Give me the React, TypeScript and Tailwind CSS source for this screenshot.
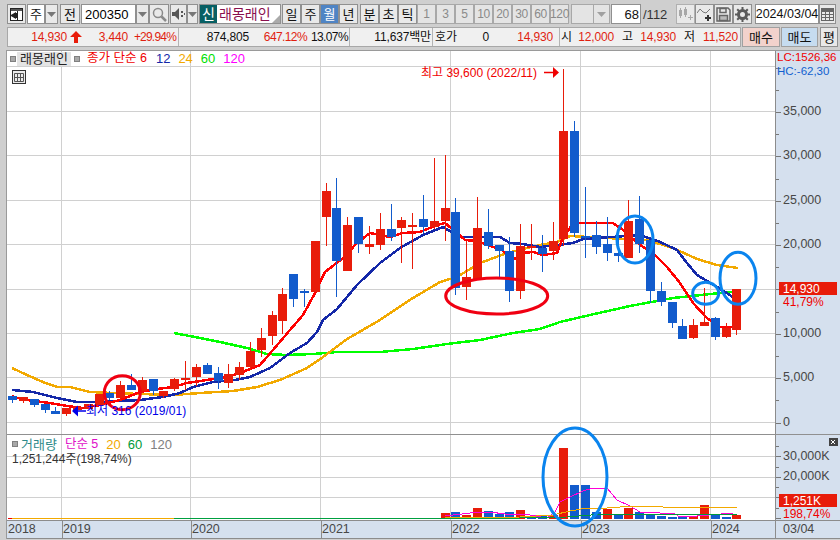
import React from "react";

const RED = "#E81C0A";
const BLUE = "#125BCC";
const PX = (i: number) => Math.floor(12.65 + 10.81 * i);

// [red?, bodyTop, bodyBottom, wickTop, wickBottom]
const candles: [number, number, number, number, number][] = [
  [0,396,400,396,403],[1,397,401,397,403],[0,399,405,399,407],[0,404,410,404,413],[0,411,414,407,414],[1,408,414,408,416],
  [1,407,410,407,411],[1,404,409,404,409],[1,394,405,394,406],[0,393,398,391,400],[1,385,398,381,401],[0,385,390,374,390],
  [1,380,391,377,393],[0,379,391,379,395],[1,391,396,391,398],[1,379,389,378,391],[1,378,380,361,390],[1,367,377,364,386],
  [0,365,374,363,374],[0,373,381,367,389],[1,374,383,364,388],[1,367,375,362,380],[1,351,367,342,370],[1,338,350,328,357],
  [1,315,336,311,345],[1,294,321,288,334],[0,274,299,274,307],[0,291,293,289,307],[1,241,292,241,292],[1,191,217,183,246],
  [0,208,261,178,297],[1,225,271,217,271],[0,217,244,217,253],[1,244,247,226,254],[1,229,245,213,250],[0,229,237,204,241],
  [1,220,228,217,263],[1,225,227,213,269],[0,219,227,195,233],[1,221,227,158,229],[1,208,221,155,241],[0,212,288,198,295],
  [1,277,287,241,300],[1,228,280,197,280],[0,232,246,209,249],[0,245,251,245,277],[0,251,291,237,302],[1,246,291,224,299],
  [1,246,247,224,260],[0,248,254,235,272],[1,241,251,222,260],[1,131,239,69,246],[0,131,233,121,237],[0,236,238,187,258],
  [0,235,247,221,254],[0,244,253,217,261],[0,253,256,236,262],[1,221,258,200,258],[0,219,244,196,253],[0,240,291,240,303],
  [0,291,302,282,306],[0,302,323,302,328],[0,326,339,319,339],[1,325,338,319,339],[1,322,326,288,326],[0,318,337,317,340],
  [1,328,337,323,338],[1,289,330,289,335],
];

const ma6 = "12,396 18,398 33,401 50,403 67,406 83,408 100,405 120,400 140,392 157,389 173,387 187,383 207,380 227,377 240,373 260,365 273,350 290,330 303,315 315,293 325,272 343,258 357,243 370,233 390,237 403,233 420,232 437,225 445,223 457,233 465,240 477,241 488,245 502,250 513,260 523,253 533,252 543,255 557,253 562,240 573,223 593,223 613,223 623,230 640,245 653,253 667,267 680,283 693,303 707,318 720,327 737,327";
const ma12 = "12,390 33,392 57,398 77,402 100,402 140,400 163,397 180,393 193,387 213,382 235,380 250,377 270,368 290,353 307,343 317,332 323,320 337,309 357,285 380,263 400,248 423,235 443,227 453,233 460,237 500,237 510,243 523,244 540,247 557,245 573,243 583,239 640,235 660,242 677,250 687,263 697,275 717,287 733,297";
const ma24 = "12,368 27,375 43,382 57,387 70,387 90,392 113,393 140,394 173,395 200,393 233,391 257,387 280,380 307,368 323,357 347,339 380,320 413,298 440,282 457,277 480,263 507,253 527,248 540,245 557,242 570,236 607,238 647,240 673,248 697,259 717,265 738,268";
const ma60 = "174,333 200,338 220,342 247,348 267,354 287,355 313,354 337,352 380,352 413,349 447,344 480,340 513,333 540,329 560,322 590,315 630,306 673,298 720,293 733,292";

const volBars: [number, number][] = [
  [40,513],[41,512],[42,515],[43,508],[44,511],[45,514],[46,512],[47,510],[48,516],[49,516],[50,515],[51,448],[52,485],[53,485],[54,512],[55,509],
  [56,515],[57,508],[58,512],[59,515],[60,516],[61,517],[62,517],[63,516],[64,505],[65,515],[66,517],[67,515],
];
const volColor: Record<number, boolean> = { 40:true,41:false,42:true,43:true,44:false,45:false,46:false,47:true,48:false,49:false,50:true,51:true,52:false,53:false,54:false,55:true,56:false,57:true,58:false,59:false,60:false,61:false,62:false,63:true,64:true,65:false,66:false,67:true };

const volMag = "445,516 470,513 490,512 505,514 520,514 530,515 547,518 555,512 560,502 570,497 583,491 593,488 607,488 617,500 630,506 640,512 660,513 675,514 680,517 697,516 733,513";
const volOr = "445,518 520,517 553,515 570,511 587,508 607,508 620,507 647,506 663,507 687,508 700,507 737,507";
const volGr = "520,518 567,517 603,514 653,514 737,514";

const vGrid = [61.5, 190.5, 320.5, 450.5, 580.5, 710.5];
const priceGrid = [66.5, 111.5, 155.5, 200.5, 244.5, 289.5, 333.5, 377.5, 422.5];
const priceLabels: [string, number][] = [["35,000",111],["30,000",155],["25,000",200],["20,000",244],["15,000",289],["10,000",333],["5,000",377],["0",422]];

function Tri({ color = "#777" }: { color?: string }) {
  return (
    <svg width="9" height="5" viewBox="0 0 9 5"><path d="M0 0h9L4.5 5z" fill={color} /></svg>
  );
}

function Btn({ className = "", bg = "bg-[#e9e9e9]", children }: { className?: string; bg?: string; children?: React.ReactNode }) {
  return (
    <div className={"flex items-center justify-center h-[20px] border border-[#909090] text-[13px] " + bg + " " + className}>
      {children}
    </div>
  );
}

function Square({ className = "" }: { className?: string }) {
  return <span className={"inline-block w-[6px] h-[6px] bg-[#a8a8a8] border border-[#808080] " + className} />;
}

function Ring({ cx, cy, rx, ry, color }: { cx: number; cy: number; rx: number; ry: number; color: string }) {
  return <ellipse cx={cx} cy={cy} rx={rx} ry={ry} fill="none" stroke={color} strokeWidth={3} />;
}

export default function App() {
  return (
    <div className="w-[840px] h-[540px] overflow-hidden bg-[#cfcfcf] flex flex-col font-['Liberation_Sans','Noto_Sans_CJK_KR',sans-serif] text-[12px] leading-none text-[#111]">
      {/* toolbar */}
      <div className="flex mt-[4px] ml-[7px] h-[20px] shrink-0">
        <Btn className="w-[19px]">
          <svg width="15" height="15" viewBox="0 0 15 15">
            <rect x="1.5" y="1.5" width="12" height="12" fill="#fff" stroke="#222" />
            <rect x="2" y="2" width="11" height="2" fill="#555" />
            <path d="M8.5 4v9" stroke="#222" />
            <path d="M7 5v7L1 8.500z" fill="#222" />
            <rect x="5" y="6" width="3" height="5" fill="#222" />
          </svg>
        </Btn>
        <Btn className="w-[18px] ml-[1px]" bg="bg-white">주</Btn>
        <Btn className="w-[13px]"><Tri /></Btn>
        <Btn className="w-[20px] ml-[2px]">전</Btn>
        <div className="w-[55px] ml-[1px] h-[20px] bg-white border border-[#909090] flex items-center pl-[3px] text-[13px] text-black">200350</div>
        <Btn className="w-[13px]"><Tri /></Btn>
        <Btn className="w-[20px]">
          <svg width="15" height="15" viewBox="0 0 15 15" fill="none" stroke="#8a8a8a" strokeWidth="1.500">
            <circle cx="6" cy="6" r="4.500" />
            <path d="M9.500 9.500L14 14" strokeWidth="2.500" />
          </svg>
        </Btn>
        <Btn className="w-[17px] ml-[1px]">
          <svg width="14" height="12" viewBox="0 0 14 12">
            <path d="M0 4h3l4-4v12L3 8H0z" fill="#555" />
            <rect x="9" y="3" width="2" height="2" fill="#555" />
            <rect x="9" y="7" width="2" height="2" fill="#555" />
            <rect x="12" y="5" width="1" height="2" fill="#555" />
          </svg>
        </Btn>
        <Btn className="w-[11px]"><Tri /></Btn>
        <div className="relative w-[82px] ml-[1px] h-[20px] bg-white border border-[#909090] flex items-center">
          <span className="w-[17px] h-[18px] bg-[#075f63] text-white text-[14px] flex items-center justify-center">신</span>
          <span className="ml-[2px] text-[#8a0f4e] text-[14px]">래몽래인</span>
          <svg className="absolute right-0 bottom-0" width="8" height="8" viewBox="0 0 8 8"><path d="M8 0v8H0z" fill="#aaa" /></svg>
        </div>
        <Btn className="w-[19px] ml-[1px]">일</Btn>
        <Btn className="w-[19px]">주</Btn>
        <Btn className="w-[19px] text-white" bg="bg-[#4f84c4]">월</Btn>
        <Btn className="w-[19px]">년</Btn>
        <Btn className="w-[19px] ml-[2px]">분</Btn>
        <Btn className="w-[19px]">초</Btn>
        <Btn className="w-[19px]">틱</Btn>
        {["1", "3", "5", "10", "20", "30", "60", "120"].map((t) => (
          <div key={t} className="w-[19px] h-[20px] flex items-center justify-center border border-[#a8a8a8] bg-[#e4e4e4] text-[#8a8a8a] text-[12px] tracking-[-0.3px] first:ml-[2px]">{t}</div>
        ))}
        <div className="w-[39px] ml-[2px] h-[20px] flex border border-[#a8a8a8] bg-[#e4e4e4]">
          <span className="flex-1 border-r border-[#a8a8a8]" />
          <span className="w-[15px] flex items-center justify-center"><Tri color="#a0a0a0" /></span>
        </div>
        <div className="w-[30px] ml-[1px] h-[20px] bg-white border border-[#909090] flex items-center justify-end pr-[1px] text-[13px]">68</div>
        <div className="w-[35px] h-[20px] flex items-center pl-[2px] text-[13px] text-[#333]">/112</div>
        <Btn className="w-[19px] border-[#b0b0b0]">
          <svg width="15" height="14" viewBox="0 0 15 14" fill="#a8a8a8">
            <rect x="1" y="3" width="3" height="6" /><rect x="2" y="1" width="1" height="10" />
            <rect x="6" y="2" width="3" height="6" /><rect x="7" y="0" width="1" height="10" />
            <path d="M10 10h2V8h1v2h2v1h-2v2h-1v-2h-2z" />
          </svg>
        </Btn>
        <Btn className="w-[19px]">
          <svg width="16" height="15" viewBox="0 0 16 15" fill="none" stroke="#777">
            <path d="M0 6l3-4 3 3 3 1 4-4" />
            <path d="M11 8v6M8 11h6" stroke="#333" strokeWidth="2" />
          </svg>
        </Btn>
        <Btn className="w-[19px]">
          <svg width="15" height="15" viewBox="0 0 15 15" fill="none" stroke="#666" strokeWidth="1.500">
            <path d="M1 1h11l2 2v11H1z" />
            <rect x="4" y="1.500" width="6" height="4" />
            <rect x="3.500" y="8.500" width="8" height="5" fill="#bbb" />
          </svg>
        </Btn>
        <Btn className="w-[19px]">
          <svg width="15" height="15" viewBox="0 0 15 15">
            <circle cx="7.500" cy="7.500" r="4" fill="none" stroke="#5a5a5a" strokeWidth="3" />
            <path d="M7.500 0v3M7.500 12v3M0 7.500h3M12 7.500h3M2.200 2.200l2 2M10.800 10.800l2 2M2.200 12.800l2-2M10.800 4.200l2-2" stroke="#5a5a5a" strokeWidth="2" />
          </svg>
        </Btn>
        <div className="w-[64px] ml-[3px] h-[20px] bg-white border border-[#909090] flex items-center justify-center text-[12.500px]">2024/03/04</div>
        <Btn className="w-[17px]">
          <svg width="13" height="13" viewBox="0 0 13 13" fill="none" stroke="#666">
            <rect x="0.500" y="0.500" width="12" height="12" />
            <rect x="0.500" y="0.500" width="12" height="3" fill="#666" />
            <path d="M4.500 3.500v9M8.500 3.500v9M0.500 6.500h12M0.500 9.500h12" />
          </svg>
        </Btn>
      </div>

      {/* quote row */}
      <div className="flex mt-[3px] ml-[7px] h-[20px] shrink-0">
        <div className="w-[734px] h-[20px] flex items-center bg-[#f0f0f0] border border-[#a8a8a8] text-[12px] tracking-[-0.15px] whitespace-nowrap">
          <span className="w-[59px] text-right text-[#e01f10]">14,930</span>
          <svg className="ml-[3px]" width="12" height="12" viewBox="0 0 12 12"><path d="M6 0l6 6H8v6H4V6H0z" fill="#e81c0a" /></svg>
          <span className="w-[46px] text-right text-[#e01f10]">3,440</span>
          <span className="w-[48px] text-right text-[#e01f10] tracking-[-0.8px]">+29.94%</span>
          <span className="w-[1px] h-[18px] ml-[2px] bg-[#b4b4b4]" />
          <span className="w-[70px] text-right">874,805</span>
          <span className="w-[58px] text-right text-[#e01f10] tracking-[-0.6px]">647.12%</span>
          <span className="w-[41px] text-right tracking-[-0.6px]">13.07%</span>
          <span className="w-[1px] h-[18px] ml-[1px] bg-[#b4b4b4]" />
          <span className="w-[81px] text-right">11,637백만</span>
          <span className="w-[1px] h-[18px] ml-[1px] bg-[#b4b4b4]" />
          <span className="w-[25px] ml-[2px]">호가</span>
          <span className="w-[29px] text-right">0</span>
          <span className="w-[64px] text-right text-[#e01f10]">14,930</span>
          <span className="w-[1px] h-[18px] ml-[6px] bg-[#b4b4b4]" />
          <span className="w-[13px] ml-[1px]">시</span>
          <span className="w-[40px] text-right text-[#e01f10]">12,000</span>
          <span className="w-[17px] ml-[8px]">고</span>
          <span className="w-[37px] text-right text-[#e01f10]">14,930</span>
          <span className="w-[16px] ml-[8px]">저</span>
          <span className="w-[38px] text-right text-[#e01f10]">11,520</span>
        </div>
        <div className="w-[38px] h-[20px] ml-[1px] flex items-center justify-center border border-[#a0a0a0] bg-[#f2d2cc] text-[13px]">매수</div>
        <div className="w-[37px] h-[20px] ml-[1px] flex items-center justify-center border border-[#a0a0a0] bg-[#c6dcf0] text-[13px]">매도</div>
        <Btn className="w-[18px] ml-[2px]">평</Btn>
      </div>

      {/* charts */}
      <div className="mt-[3px] ml-[6px] flex flex-col border-t border-l border-[#9a9a9a] bg-white">
        {/* price pane */}
        <div className="flex h-[383px]">
          <div className="relative w-[768px] h-[383px]">
            <svg className="block" width="768" height="383" viewBox="7 51 768 383">
              <g stroke="#d0d0d0" shapeRendering="crispEdges">
                {priceGrid.map((y) => <line key={y} x1={7} x2={775} y1={y} y2={y} />)}
                {vGrid.map((x) => <line key={x} x1={x} x2={x} y1={51} y2={434} />)}
              </g>
              <g fill="none" strokeWidth={2.5} shapeRendering="crispEdges">
                <polyline points={ma60} stroke="#00ff00" />
                <polyline points={ma24} stroke="#f2a900" />
                <polyline points={ma12} stroke="#1428a8" />
                <polyline points={ma6} stroke="#ff0000" />
              </g>
              <g shapeRendering="crispEdges">
                {candles.map((c, i) => {
                  const x = PX(i);
                  const col = c[0] ? RED : BLUE;
                  return (
                    <g key={i}>
                      <rect x={x} y={c[3]} width={1} height={c[4] - c[3]} fill={col} />
                      <rect x={x - 4} y={c[1]} width={9} height={Math.max(2, c[2] - c[1])} fill={col} />
                    </g>
                  );
                })}
              </g>
              <Ring cx={122.3} cy={392.7} rx={18} ry={17} color="#f00012" />
              <Ring cx={496.7} cy={296} rx={51} ry={18} color="#f00012" />
              <Ring cx={635} cy={239.5} rx={18} ry={23.5} color="#0a84ee" />
              <Ring cx={705.7} cy={293.3} rx={13} ry={11} color="#0a84ee" />
              <Ring cx={738} cy={278.3} rx={18} ry={26} color="#0a84ee" />
              <text x={421} y={77} fontSize={12} fill="#f00000">최고 39,600 (2022/11)</text>
              <path d="M544 72.500h10" stroke="#f00000" strokeWidth={1.500} />
              <path d="M553 67l6 5.500-6 5.500z" fill="#f00000" />
              <path d="M72 411l6-5.500v11z" fill="#0000e8" />
              <path d="M77 411h9" stroke="#0000e8" strokeWidth={1.500} />
              <text x={86} y={415} fontSize={12} fill="#0000e8">최저 316 (2019/01)</text>
            </svg>
            <div className="absolute left-[3px] top-0 h-[15px] flex items-center text-[13px] whitespace-nowrap">
              <Square />
              <span className="ml-[1px] w-[54px] h-[14px] bg-[#e4e4e4] flex items-center justify-center text-[#222]">래몽래인</span>
              <Square className="ml-[3px]" />
              <span className="ml-[7px] text-[12.500px] text-[#f00000]">종가 단순 6</span>
              <span className="ml-[9px] text-[#1428a8]">12</span>
              <span className="ml-[8px] text-[#f2a900]">24</span>
              <span className="ml-[8px] text-[#00e000]">60</span>
              <span className="ml-[8px] text-[#ff00ff]">120</span>
            </div>
            <div className="absolute left-[5px] top-[19px]">
              <svg className="block" width="14" height="14" viewBox="0 0 14 14" fill="none" stroke="#333">
                <rect x="0.500" y="0.500" width="13" height="13" fill="#ececec" />
                <path d="M2.500 3.500h9M2.500 3.500v8h9v-8M5.500 3.500v8M8.500 3.500v8M2.500 7.500h9" stroke="#555" />
              </svg>
            </div>
          </div>
          <div className="w-[65px] h-[383px] bg-[#d5e0ee] border-l border-[#8c8c8c] relative">
            <svg className="block" width="64" height="383" viewBox="776 51 64 383">
              {Array.from({ length: 17 }, (_, i) => 422.5 - i * 22.18).map((y, i) => (
                <line key={i} x1={776} x2={i % 2 ? 779 : 781} y1={Math.round(y) + 0.5} y2={Math.round(y) + 0.5} stroke="#777" shapeRendering="crispEdges" />
              ))}
              {priceLabels.map(([t, y]) => (
                <text key={t} x={783} y={y + 3.500} fontSize={12.500} fill="#474747">{t}</text>
              ))}
              <text x={777} y={61} fontSize={11.500} fill="#f00000">LC:1526,36</text>
              <text x={777} y={75} fontSize={11.500} fill="#1060d0">HC:-62,30</text>
              <rect x={779} y={282} width={58} height={13} fill={RED} />
              <text x={783} y={293} fontSize={12} fill="#ffffff">14,930</text>
              <text x={783} y={306} fontSize={12} fill="#f00000">41,79%</text>
            </svg>
          </div>
        </div>

        {/* volume pane */}
        <div className="flex h-[86px] border-t border-[#909090]">
          <div className="relative z-10 w-[768px] h-[85px]">
            <svg className="block overflow-visible" width="768" height="85" viewBox="7 435 768 85">
              <g stroke="#d0d0d0" shapeRendering="crispEdges">
                {[456.5, 477.5, 497.5].map((y) => <line key={y} x1={7} x2={775} y1={y} y2={y} />)}
                {vGrid.map((x) => <line key={x} x1={x} x2={x} y1={435} y2={520} />)}
              </g>
              <g shapeRendering="crispEdges">
                {volBars.map(([i, y]) => (
                  <rect key={i} x={PX(i) - 4} y={y} width={9} height={519 - y} fill={volColor[i] ? RED : BLUE} />
                ))}
                <rect x={8} y={518} width={4} height={1} fill="#f00000" />
                <rect x={12} y={518} width={162} height={1} fill="#f2a900" />
                <rect x={174} y={518} width={346} height={1} fill="#00a040" />
              </g>
              <g fill="none" strokeWidth={1} shapeRendering="crispEdges">
                <polyline points={volMag} stroke="#ff00d8" />
                <polyline points={volOr} stroke="#f2a900" />
                <polyline points={volGr} stroke="#009a3a" />
              </g>
              <Ring cx={575} cy={477} rx={32} ry={49} color="#0a84ee" />
            </svg>
            <div className="absolute left-[5px] top-[2px] flex flex-col gap-[2px] whitespace-nowrap">
              <div className="flex items-center h-[14px] text-[13px]">
                <Square />
                <span className="ml-[3px] text-[#2d8a8a]">거래량</span>
                <span className="ml-[8px] text-[12.500px] text-[#e010c8]">단순 5</span>
                <span className="ml-[8px] text-[#f2a900]">20</span>
                <span className="ml-[7px] text-[#009a3a]">60</span>
                <span className="ml-[8px] text-[#808080]">120</span>
              </div>
              <span className="text-[12px] text-[#333]">1,251,244주(198,74%)</span>
            </div>
          </div>
          <div className="w-[65px] h-[85px] bg-[#d5e0ee] border-l border-[#8c8c8c] relative">
            <svg className="block" width="64" height="85" viewBox="776 435 64 85">
              {[446.5, 456.5, 467.5, 477.5, 487.5, 497.5, 508.5, 518.5].map((y, i) => (
                <line key={y} x1={776} x2={i % 2 ? 781 : 779} y1={y} y2={y} stroke="#777" shapeRendering="crispEdges" />
              ))}
              <text x={783} y={460} fontSize={12.500} fill="#474747">30,000K</text>
              <text x={783} y={480} fontSize={12.500} fill="#474747">20,000K</text>
              <rect x={829} y={438} width={9} height={8} fill="#444" />
              <path d="M831 440l4 4M835 440l-4 4" stroke="#fff" />
              <rect x={779} y={494} width={58} height={13} fill={RED} />
              <text x={783} y={505} fontSize={12} fill="#ffffff">1,251K</text>
              <text x={783} y={518} fontSize={12} fill="#f00000">198,74%</text>
            </svg>
          </div>
        </div>

        {/* time axis */}
        <div className="flex h-[19px] border-t border-b border-[#8c8c8c] bg-[#d5e0ee] text-[12.500px] text-[#474747]">
          <div className="w-[55px] flex items-center pl-[1px]">2018</div>
          <div className="w-[129px] flex items-center border-l border-[#8c8c8c]">2019</div>
          <div className="w-[130px] flex items-center border-l border-[#8c8c8c]">2020</div>
          <div className="w-[130px] flex items-center border-l border-[#8c8c8c]">2021</div>
          <div className="w-[130px] flex items-center border-l border-[#8c8c8c]">2022</div>
          <div className="w-[130px] flex items-center border-l border-[#8c8c8c]">2023</div>
          <div className="w-[64px] flex items-center border-l border-[#8c8c8c]">2024</div>
          <div className="flex-1 flex items-center pl-[7px] border-l border-[#8c8c8c]">03/04</div>
        </div>
      </div>
    </div>
  );
}
